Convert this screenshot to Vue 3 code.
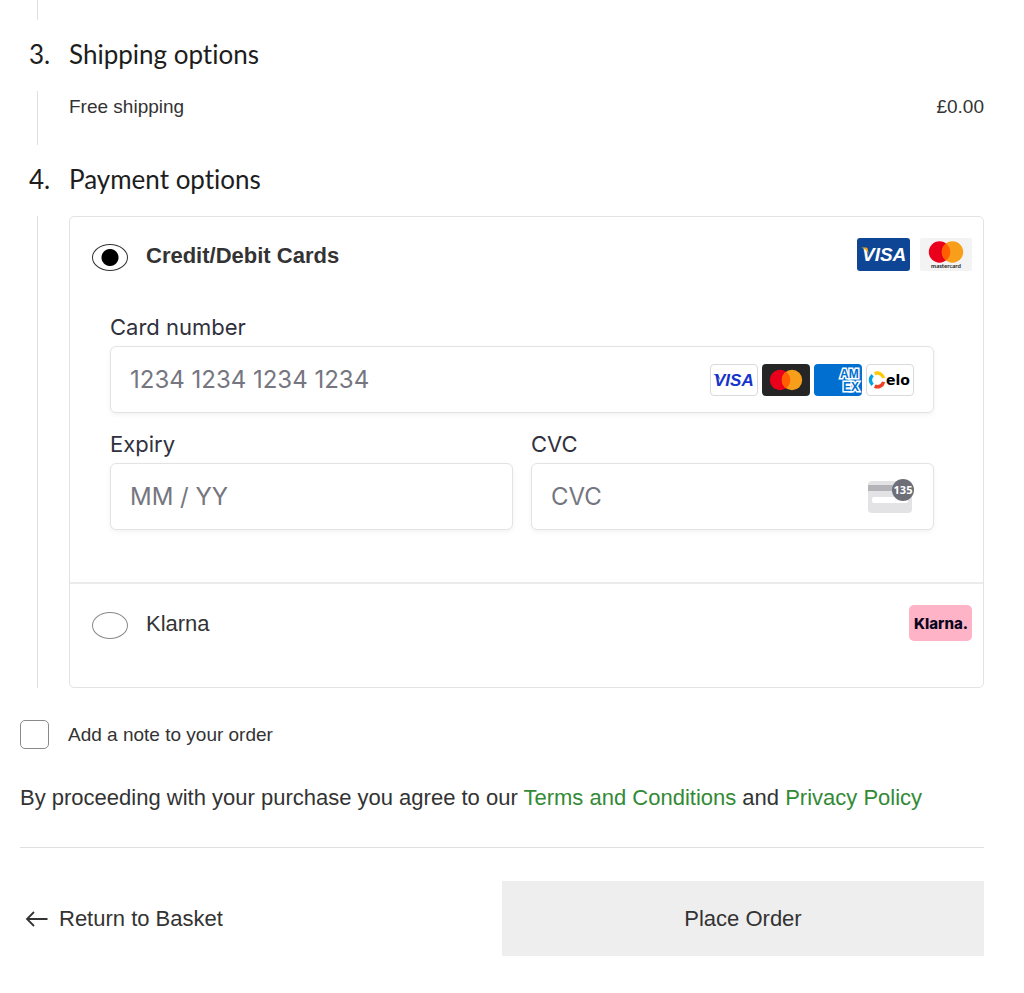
<script setup>
import { ref } from 'vue'

const method = ref('card')
const addNote = ref(false)
const cardNumber = ref('')
const expiry = ref('')
const cvc = ref('')
</script>

<template>
  <main class="checkout">
    <div class="rail rail-end"></div>

    <section>
      <h2 class="step-title"><span class="step-number">3.</span>Shipping options</h2>
      <div class="rail shipping">
        <span>Free shipping</span>
        <span>£0.00</span>
      </div>
    </section>

    <section>
      <h2 class="step-title"><span class="step-number">4.</span>Payment options</h2>
      <div class="rail">
        <div class="methods">
          <div class="method card-method">
            <div class="method-head">
              <input id="pay-card" v-model="method" class="radio" type="radio" name="method" value="card" />
              <label for="pay-card" class="method-name chosen">Credit/Debit Cards</label>
              <span class="logos">
                <svg width="53" height="33" viewBox="0 0 53 33" role="img" aria-label="Visa">
                  <rect width="53" height="33" rx="3" fill="#0e4595" />
                  <text x="5" y="23" class="visa" fill="#fff">VISA</text>
                  <path d="M4 9.500h4.500c1.500 0 2 .6 2.300 1.800l1 5C10.500 13 7.500 10.700 4 9.500z" fill="#f2a51f" />
                </svg>
                <svg width="52" height="33" viewBox="0 0 52 33" role="img" aria-label="Mastercard">
                  <rect width="52" height="33" rx="2" fill="#f3f3f3" />
                  <circle cx="19.500" cy="14" r="10.700" fill="#eb001b" />
                  <circle cx="32.500" cy="14" r="10.700" fill="#f79e1b" />
                  <path d="M26 5.500a10.700 10.700 0 0 1 0 17a10.700 10.700 0 0 1 0-17z" fill="#ff5f00" />
                  <text x="26" y="30" text-anchor="middle" class="mc-word">mastercard</text>
                </svg>
              </span>
            </div>

            <div class="fields">
              <div class="field wide">
                <label for="number">Card number</label>
                <div class="box">
                  <input id="number" v-model="cardNumber" type="text" inputmode="numeric" placeholder="1234 1234 1234 1234" />
                  <span class="brands">
                    <svg width="48" height="32" viewBox="0 0 48 32" role="img" aria-label="Visa">
                      <rect x=".5" y=".5" width="47" height="31" rx="3.500" fill="#fff" stroke="#d9d9dd" />
                      <path d="M3 10.300h5l2.500 6C8 12.500 6 11.500 3 10.300z" fill="#1434cb" />
                      <text x="4" y="22" class="visa small" fill="#1434cb">VISA</text>
                    </svg>
                    <svg width="48" height="32" viewBox="0 0 48 32" role="img" aria-label="Mastercard">
                      <rect width="48" height="32" rx="4" fill="#252525" />
                      <circle cx="18" cy="16" r="10.200" fill="#eb001b" />
                      <circle cx="30" cy="16" r="10.200" fill="#f79e1b" />
                      <path d="M24 7.700a10.200 10.200 0 0 1 0 16.600a10.200 10.200 0 0 1 0-16.600z" fill="#ff5f00" />
                    </svg>
                    <svg width="48" height="32" viewBox="0 0 48 32" role="img" aria-label="American Express">
                      <rect width="48" height="32" rx="4" fill="#016fd0" />
                      <g class="amex">
                        <text x="26" y="14">AM</text>
                        <text x="29" y="27">EX</text>
                      </g>
                    </svg>
                    <svg width="48" height="32" viewBox="0 0 48 32" role="img" aria-label="Elo">
                      <rect x=".5" y=".5" width="47" height="31" rx="3.500" fill="#fff" stroke="#d9d9dd" />
                      <g fill="none" stroke-width="3.400">
                        <path d="M8.700 9.700a6.300 6.300 0 0 1 8.900 4.300" stroke="#ffcb05" />
                        <path d="M6.600 11.200a6.300 6.300 0 0 0 0 9.500" stroke="#00a4e0" />
                        <path d="M17.600 17.800a6.300 6.300 0 0 1-8.900 4.300" stroke="#ef4123" />
                      </g>
                      <text x="20" y="21" class="elo">elo</text>
                    </svg>
                  </span>
                </div>
              </div>

              <div class="field">
                <label for="expiry">Expiry</label>
                <div class="box">
                  <input id="expiry" v-model="expiry" type="text" inputmode="numeric" placeholder="MM / YY" />
                </div>
              </div>

              <div class="field">
                <label for="cvc">CVC</label>
                <div class="box">
                  <input id="cvc" v-model="cvc" type="text" inputmode="numeric" placeholder="CVC" />
                  <svg width="46" height="36" viewBox="0 0 46 36" aria-hidden="true">
                    <rect y="2" width="44" height="32" rx="4" fill="#e3e3e6" />
                    <rect y="6" width="44" height="6" fill="#b3b3b8" />
                    <rect x="4" y="18" width="36" height="6" rx="2" fill="#fff" />
                    <circle cx="35" cy="11" r="11" fill="#6d6e78" />
                    <text x="35" y="15" text-anchor="middle" class="digits">135</text>
                  </svg>
                </div>
              </div>
            </div>
          </div>

          <div class="method klarna-method">
            <div class="method-head">
              <input id="pay-klarna" v-model="method" class="radio" type="radio" name="method" value="klarna" />
              <label for="pay-klarna" class="method-name">Klarna</label>
              <svg width="63" height="36" viewBox="0 0 63 36" role="img" aria-label="Klarna">
                <rect width="63" height="36" rx="5" fill="#ffb3c7" />
                <text x="32" y="24" text-anchor="middle" class="klarna">Klarna.</text>
              </svg>
            </div>
          </div>
        </div>
      </div>
    </section>

    <div class="note">
      <input id="note" v-model="addNote" type="checkbox" />
      <label for="note">Add a note to your order</label>
    </div>

    <p class="terms">
      By proceeding with your purchase you agree to our <a href="#terms">Terms and Conditions</a> and
      <a href="#privacy">Privacy Policy</a>
    </p>

    <div class="actions">
      <a href="#basket" class="back">
        <svg width="24" height="18" viewBox="0 0 24 18" fill="none" stroke="#333" stroke-width="1.800" aria-hidden="true">
          <path d="M22.500 9H2M9 2L2 9l7 7" />
        </svg>
        Return to Basket
      </a>
      <button type="button" class="place">Place Order</button>
    </div>
  </main>
</template>

<style>
body {
  margin: 0;
  background: #fff;
}
</style>

<style scoped>
.checkout {
  box-sizing: border-box;
  padding: 0 40px 36px 20px;
  color: #333;
  font: 22px/32px "Liberation Sans", Arial, sans-serif;
}
.rail {
  margin-left: 17px;
  padding-left: 31px;
  border-left: 1px solid #e0e0e0;
}
.rail-end {
  height: 20px;
}
.step-title {
  display: flex;
  margin: 0;
  padding: 16px 0 19px;
  color: #1d1d1d;
  font: 400 26px/36px Lato, sans-serif;
  font-variant-ligatures: none;
}
.step-number {
  box-sizing: border-box;
  width: 49px;
  padding-left: 9px;
}
.shipping {
  display: flex;
  justify-content: space-between;
  height: 54px;
  font-size: 19px;
}
.methods {
  border: 1px solid #e3e3e3;
  border-radius: 5px;
}
.method {
  padding: 21px 11px 0 22px;
}
.card-method {
  padding-bottom: 52px;
}
.klarna-method {
  border-top: 2px solid #ebebeb;
  padding-bottom: 46px;
}
.method-head {
  display: flex;
  align-items: center;
}
.method-head svg {
  display: block;
}
.radio {
  appearance: none;
  flex: none;
  box-sizing: border-box;
  width: 36px;
  height: 27px;
  margin: 5px 18px 0 0;
  border: 1px solid #8a8a8a;
  border-radius: 50%;
  background: #fff;
}
.radio:checked {
  border-color: #333;
  background: radial-gradient(circle, #000 8px, #fff 9px);
}
.method-name {
  flex: 1;
  margin-top: 2px;
}
.chosen {
  font-weight: 700;
}
.logos {
  display: flex;
  align-self: flex-start;
  gap: 10px;
}
.fields {
  display: grid;
  grid-template-columns: repeat(2, minmax(0, 1fr));
  gap: 16px 18px;
  margin: 40px 38px 0 18px;
  color: #30313d;
  font-family: Inter, sans-serif;
}
.wide {
  grid-column: 1 / -1;
}
.field label {
  display: block;
  line-height: 30px;
  padding-bottom: 4px;
}
.box {
  display: flex;
  align-items: center;
  box-sizing: border-box;
  height: 67px;
  padding: 0 19px;
  border: 1px solid #e3e3e3;
  border-radius: 6px;
  background: #fff;
  box-shadow: 0 2px 5px rgba(0, 0, 0, 0.05);
}
.box input {
  flex: 1;
  min-width: 0;
  padding: 0;
  border: 0;
  outline: 0;
  background: none;
  color: #30313d;
  font: 24px/32px Inter, sans-serif;
}
.box input::placeholder {
  color: #757680;
  opacity: 1;
}
.brands {
  display: flex;
  gap: 4px;
}
.visa {
  font: italic 700 19px "Liberation Sans", Arial, sans-serif;
}
.small {
  font-size: 17px;
}
.mc-word {
  font: 700 6px Lato, sans-serif;
  fill: #222;
}
.amex {
  fill: #016fd0;
  stroke: #fff;
  stroke-width: 3px;
  paint-order: stroke;
  font: 700 12px "Liberation Sans", Arial, sans-serif;
}
.elo {
  font: 700 14px "DejaVu Sans", sans-serif;
  fill: #000;
}
.digits {
  font: 700 11px "Noto Sans", sans-serif;
  fill: #fff;
}
.klarna {
  font: 800 15px Inter, sans-serif;
  fill: #0b051d;
}
.note {
  display: flex;
  align-items: center;
  gap: 19px;
  margin-top: 32px;
  font-size: 19px;
  line-height: 29px;
}
.note input {
  appearance: none;
  box-sizing: border-box;
  width: 29px;
  height: 29px;
  margin: 0;
  border: 1px solid #8a8a8a;
  border-radius: 5px;
  background: #fff;
}
.note input:checked {
  background: #333;
}
.terms {
  margin: 0;
  padding: 33px 0;
  border-bottom: 1px solid #e0e0e0;
}
.terms a {
  color: #338a36;
  text-decoration: none;
}
.actions {
  display: grid;
  grid-template-columns: 1fr 1fr;
  margin-top: 33px;
}
.back {
  display: flex;
  align-items: center;
  gap: 10px;
  padding-left: 5px;
  color: #333;
  text-decoration: none;
}
.place {
  height: 75px;
  border: 0;
  background: #eee;
  color: #333;
  font: inherit;
}
</style>
